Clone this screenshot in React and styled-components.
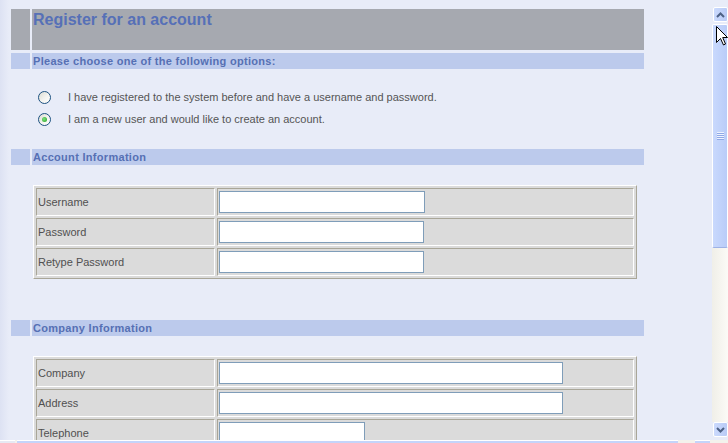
import React from 'react'
import styled, { createGlobalStyle } from 'styled-components'

const GlobalStyle = createGlobalStyle`
  html, body {
    margin: 0;
    padding: 0;
  }

  body {
    width: 728px;
    height: 443px;
    overflow: hidden;
    background: #e8ecf8;
    font-family: "Liberation Sans", Arial, sans-serif;
  }
`

const Window = styled.div`
  position: relative;
  width: 728px;
  height: 443px;
  display: flex;
  flex-direction: column;
  overflow: hidden;
`

const Viewport = styled.div`
  display: flex;
  height: 440px;
`

const Page = styled.div`
  flex: 1;
  overflow: hidden;
  padding: 9px 0 0 11px;
  background: linear-gradient(to right, #dde2f3 0, #e8ecf8 9px);
`

const Content = styled.div`
  width: 633px;
`

const Bar = styled.div`
  display: grid;
  grid-template-columns: 19px 1fr;
  column-gap: 2px;
  height: ${props => (props.$title ? 41 : 16)}px;
  margin-top: ${props => props.$gap || 0}px;
`

const BarCell = styled.div`
  background: ${props => (props.$title ? '#a6a9b0' : '#bccaec')};
`

const Title = styled.h1`
  margin: 0;
  padding: 1px 0 0 1px;
  font-size: 16px;
  line-height: 19px;
  font-weight: bold;
  color: #5670b7;
  background: #a6a9b0;
`

const SectionTitle = styled.h2`
  margin: 0;
  padding-left: 1px;
  font-size: 11px;
  line-height: 16px;
  font-weight: bold;
  letter-spacing: 0.3px;
  color: #5670b4;
  background: #bccaec;
`

const Options = styled.div`
  margin: 17px 0 0 27px;
`

const Option = styled.label`
  display: flex;
  align-items: center;
  gap: 17px;
  height: 22px;
  font-size: 11px;
  color: #555;
`

const Radio = styled.span`
  position: relative;
  width: 13px;
  height: 13px;
  box-sizing: border-box;
  border: 1px solid #1c5180;
  border-radius: 50%;
  background: linear-gradient(135deg, #dcdcd4 0%, #f4f4f0 55%, #ffffff 100%);

  &::after {
    content: '';
    display: ${props => (props.$checked ? 'block' : 'none')};
    position: absolute;
    left: 3px;
    top: 3px;
    width: 5px;
    height: 5px;
    border-radius: 50%;
    background: radial-gradient(circle at 40% 40%, #7fe07f, #21a121);
  }
`

const FormTable = styled.div`
  display: grid;
  grid-template-columns: 179px 417px;
  gap: 2px;
  padding: 2px;
  width: 604px;
  box-sizing: border-box;
  margin: ${props => props.$gap || 20}px 0 0 22px;
  border: 1px solid;
  border-color: #ffffff #a9a698 #a9a698 #ffffff;
  background: #dbdbdb;
`

const Cell = styled.div`
  display: flex;
  align-items: center;
  height: 28px;
  box-sizing: border-box;
  padding: 0 1px;
  border: 1px solid;
  border-color: #a9a698 #ffffff #ffffff #a9a698;
  background: #dbdbdb;
  font-size: 11px;
  color: #505050;
`

const TextInput = styled.input`
  width: ${props => props.$width}px;
  height: 22px;
  box-sizing: border-box;
  margin: 0;
  border: 1px solid #7f9db9;
  background: #fff;
  outline: none;
`

const ScrollBar = styled.div`
  width: 16px;
  display: flex;
  flex-direction: column;
  padding-top: 7px;
  box-sizing: border-box;
`

const ScrollButton = styled.div`
  height: 15px;
  margin-left: 1px;
  box-sizing: border-box;
  border: 1px solid #fff;
  border-radius: 2px;
  background: linear-gradient(to right, #cbdafd, #b9cbf6);
  display: flex;
  align-items: center;
  justify-content: center;
`

const Thumb = styled.div`
  height: 224px;
  margin: 2px 0 0 0;
  box-sizing: border-box;
  border: 1px solid #fff;
  border-bottom-color: #9db2e6;
  border-radius: 2px;
  background: linear-gradient(to right, #c9d9fd, #b9ccf8);
  display: flex;
  align-items: center;
  justify-content: center;
`

const Grip = styled.div`
  width: 7px;
  height: 8px;
  background: repeating-linear-gradient(
    to bottom,
    #eef3ff 0,
    #eef3ff 1px,
    #8fa8e6 1px,
    #8fa8e6 2px
  );
`

const Track = styled.div`
  flex: 1;
  background: linear-gradient(to right, #f0efe8, #fbfaf6);
`

const HScroll = styled.div`
  height: 3px;
  display: flex;
  background: #f3f2ec;
`

const HPiece = styled.div`
  width: ${props => props.$w}px;
  margin-left: ${props => props.$ml || 0}px;
  background: ${props => props.$bg || '#c4d4fa'};
  border-top: 1px solid #fff;
`

const Cursor = styled.svg`
  position: absolute;
  left: 716px;
  top: 26px;
`

const Chevron = ({ down }) => (
  <svg width="9" height="6" viewBox="0 0 9 6">
    <path
      d={down ? 'M1 1 L4.5 4.5 L8 1' : 'M1 5 L4.5 1.5 L8 5'}
      fill="none"
      stroke="#4d6185"
      strokeWidth="2"
    />
  </svg>
)

const accountRows = [
  { label: 'Username', width: 206 },
  { label: 'Password', width: 205 },
  { label: 'Retype Password', width: 205 },
]

const companyRows = [
  { label: 'Company', width: 344 },
  { label: 'Address', width: 344 },
  { label: 'Telephone', width: 146 },
]

const renderRows = rows =>
  rows.map(row => (
    <React.Fragment key={row.label}>
      <Cell>{row.label}</Cell>
      <Cell>
        <TextInput type="text" $width={row.width} />
      </Cell>
    </React.Fragment>
  ))

export default function App() {
  return (
    <Window>
      <GlobalStyle />
      <Viewport>
        <Page>
          <Content>
            <Bar $title>
              <BarCell $title />
              <Title>Register for an account</Title>
            </Bar>
            <Bar $gap={3}>
              <BarCell />
              <SectionTitle>Please choose one of the following options:</SectionTitle>
            </Bar>

            <Options>
              <Option>
                <Radio />
                I have registered to the system before and have a username and password.
              </Option>
              <Option>
                <Radio $checked />
                I am a new user and would like to create an account.
              </Option>
            </Options>

            <Bar $gap={19}>
              <BarCell />
              <SectionTitle>Account Information</SectionTitle>
            </Bar>
            <FormTable>{renderRows(accountRows)}</FormTable>

            <Bar $gap={41}>
              <BarCell />
              <SectionTitle>Company Information</SectionTitle>
            </Bar>
            <FormTable>{renderRows(companyRows)}</FormTable>
          </Content>
        </Page>

        <ScrollBar>
          <ScrollButton>
            <Chevron />
          </ScrollButton>
          <Thumb>
            <Grip />
          </Thumb>
          <Track />
          <ScrollButton>
            <Chevron down />
          </ScrollButton>
          <div style={{ height: 3 }} />
        </ScrollBar>
      </Viewport>

      <HScroll>
        <HPiece $w={15} $bg="#e6e9f3" />
        <HPiece $w={661} $ml={2} />
        <HPiece $w={15} $ml={17} />
      </HScroll>

      <Cursor width="12" height="20" viewBox="0 0 12 20">
        <path
          d="M0.5 0.5 L0.5 16.5 L4.5 12.5 L7.5 19 L9.5 18 L6.7 11.5 L11.5 11.5 Z"
          fill="#fff"
          stroke="#000"
          strokeWidth="1"
        />
      </Cursor>
    </Window>
  )
}
